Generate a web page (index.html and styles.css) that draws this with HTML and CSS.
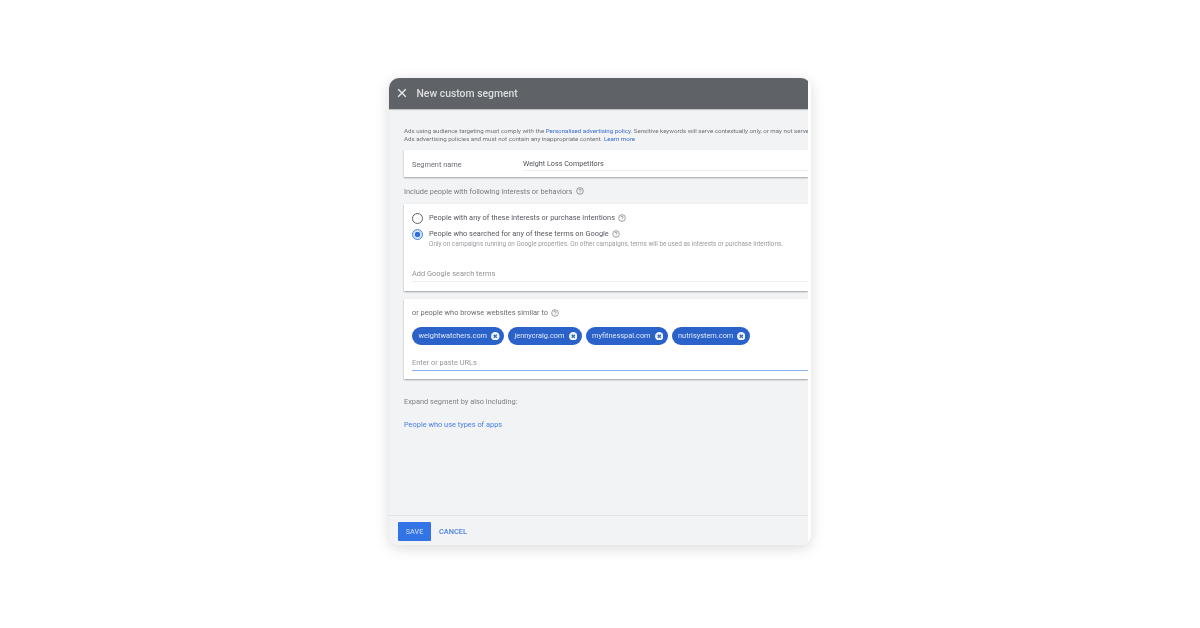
FILE: index.html
```html
<!DOCTYPE html>
<html lang="en">
<head>
    <meta charset="UTF-8">
    <meta name="viewport" content="width=device-width, initial-scale=1.0">
    <title>New custom segment</title>
    <link rel="stylesheet" href="styles.css">
</head>
<body>
    <div class="panel">
        <div class="panel-inner">
            <!-- Header -->
            <header class="top-bar">
                <svg class="close-icon" viewBox="0 0 10 10" width="10" height="10"><path d="M1.2 1.2l7.6 7.6M8.8 1.2l-7.6 7.6"/></svg>
                <span class="top-title">New custom segment</span>
            </header>

            <main class="content">
                <p class="notice">Ads using audience targeting must comply with the <a class="link-dark">Personalised advertising policy.</a> Sensitive keywords will serve contextually only, or may not serve<br>Ads advertising policies and must not contain any inappropriate content. <a class="link-dark">Learn more</a></p>

                <!-- Segment name -->
                <section class="card name-card">
                    <span class="name-label">Segment name</span>
                    <span class="name-value">Weight Loss Competitors</span>
                </section>

                <div class="section-title">Include people with following interests or behaviors
                    <svg class="help" viewBox="0 0 12 12"><circle cx="6" cy="6" r="5"/><path d="M4.4 4.8a1.6 1.6 0 1 1 2.5 1.3c-.6.4-.9.7-.9 1.3M6 8.4v1"/></svg>
                </div>

                <!-- Search terms -->
                <section class="card terms-card">
                    <div class="radio-row">
                        <span class="radio"></span>
                        <div class="radio-copy">People with any of these interests or purchase intentions
                            <svg class="help" viewBox="0 0 12 12"><circle cx="6" cy="6" r="5"/><path d="M4.4 4.8a1.6 1.6 0 1 1 2.5 1.3c-.6.4-.9.7-.9 1.3M6 8.4v1"/></svg>
                        </div>
                    </div>
                    <div class="radio-row radio-row-on">
                        <span class="radio radio-on"></span>
                        <div class="radio-copy">People who searched for any of these terms on Google
                            <svg class="help" viewBox="0 0 12 12"><circle cx="6" cy="6" r="5"/><path d="M4.4 4.8a1.6 1.6 0 1 1 2.5 1.3c-.6.4-.9.7-.9 1.3M6 8.4v1"/></svg>
                            <div class="radio-hint">Only on campaigns running on Google properties. On other campaigns, terms will be used as interests or purchase intentions.</div>
                        </div>
                    </div>
                    <div class="field terms-field">Add Google search terms</div>
                </section>

                <!-- Websites -->
                <section class="card sites-card">
                    <div class="sites-title">or people who browse websites similar to
                        <svg class="help" viewBox="0 0 12 12"><circle cx="6" cy="6" r="5"/><path d="M4.4 4.8a1.6 1.6 0 1 1 2.5 1.3c-.6.4-.9.7-.9 1.3M6 8.4v1"/></svg>
                    </div>
                    <div class="chips">
                        <span class="chip">weightwatchers.com<svg class="chip-x" viewBox="0 0 10 10"><circle cx="5" cy="5" r="5"/><path d="M3.2 3.2l3.6 3.6M6.8 3.2l-3.6 3.6"/></svg></span>
                        <span class="chip">jennycraig.com<svg class="chip-x" viewBox="0 0 10 10"><circle cx="5" cy="5" r="5"/><path d="M3.2 3.2l3.6 3.6M6.8 3.2l-3.6 3.6"/></svg></span>
                        <span class="chip">myfitnesspal.com<svg class="chip-x" viewBox="0 0 10 10"><circle cx="5" cy="5" r="5"/><path d="M3.2 3.2l3.6 3.6M6.8 3.2l-3.6 3.6"/></svg></span>
                        <span class="chip">nutrisystem.com<svg class="chip-x" viewBox="0 0 10 10"><circle cx="5" cy="5" r="5"/><path d="M3.2 3.2l3.6 3.6M6.8 3.2l-3.6 3.6"/></svg></span>
                    </div>
                    <div class="field urls-field">Enter or paste URLs</div>
                </section>

                <div class="expand-title">Expand segment by also including:</div>
                <a class="apps-link">People who use types of apps</a>
            </main>

            <!-- Footer -->
            <footer class="bottom-bar">
                <button class="save-btn" type="button">SAVE</button>
                <button class="cancel-btn" type="button">CANCEL</button>
            </footer>
        </div>
    </div>
</body>
</html>
```

FILE: styles.css
```css
* {
    box-sizing: border-box;
}
body {
    margin: 0;
    height: 628px;
    overflow: hidden;
    background-color: #fff;
    font-family: Roboto, "Liberation Sans", sans-serif;
    color: #5f6368;
}
.panel {
    width: 422px;
    height: 467px;
    margin: 78px auto 0;
    border-radius: 10px;
    background-color: #fff;
    box-shadow: 0 3px 14px rgba(0, 0, 0, 0.15);
    overflow: hidden;
}
.panel-inner {
    display: flex;
    flex-direction: column;
    width: 419px;
    height: 100%;
    background-color: #f1f3f4;
    overflow: hidden;
    filter: blur(0.65px);
}
.top-bar {
    display: flex;
    align-items: center;
    flex: none;
    height: 31px;
    padding-left: 8px;
    background-color: #5f6368;
    box-shadow: 0 1px 1px rgba(0, 0, 0, 0.2);
}
.close-icon {
    margin-bottom: 1px;
    fill: none;
    stroke: #eceded;
    stroke-width: 1.3;
}
.top-title {
    margin-left: 9.5px;
    font-size: 10.4px;
    font-weight: 500;
    color: #dcddde;
}
.content {
    flex: 1;
    padding: 17.5px 0 0 15px;
    width: 419px;
}
.notice {
    margin: 0;
    width: 404px;
    font-size: 6.18px;
    line-height: 8px;
    white-space: nowrap;
    color: #6f7378;
}
.link-dark {
    color: #3a6bd0;
}
.card {
    background-color: #fff;
    box-shadow: 0 1px 1.5px rgba(60, 64, 67, 0.45);
}
.name-card {
    display: flex;
    height: 27px;
    margin-top: 7.5px;
    padding-left: 8px;
}
.name-label {
    width: 111px;
    padding-top: 9.5px;
    font-size: 7.4px;
    line-height: 9px;
    color: #6a6e73;
}
.name-value {
    flex: 1;
    height: 20.5px;
    padding-top: 8.5px;
    border-bottom: 1px solid #eceff1;
    font-size: 7.2px;
    line-height: 9px;
    color: #4f5358;
}
.section-title {
    display: flex;
    align-items: center;
    gap: 2.5px;
    height: 14px;
    margin-top: 7px;
    font-size: 7.4px;
    color: #777b80;
}
.help {
    flex: none;
    display: inline-block;
    width: 8px;
    height: 8px;
    margin-left: 1px;
    vertical-align: -1.5px;
    fill: none;
    stroke: #5f6368;
    stroke-width: 0.9;
}
.terms-card {
    height: 87px;
    margin-top: 6px;
    padding: 8px 0 0 8px;
}
.radio-row {
    display: flex;
    align-items: flex-start;
    gap: 6px;
    height: 12px;
}
.radio-row-on {
    height: 20px;
    margin-top: 4px;
}
.radio {
    flex: none;
    width: 11px;
    height: 11px;
    margin-top: 0.5px;
    border: 1px solid #5f6368;
    border-radius: 50%;
}
.radio-on {
    border-color: #4285f4;
    background: radial-gradient(circle, #2f6fe0 0 2.5px, #d3e3fb 3px);
}
.radio-copy {
    font-size: 7.4px;
    line-height: 12px;
    color: #55595e;
    white-space: nowrap;
}
.radio-hint {
    font-size: 6.38px;
    line-height: 8px;
    color: #999ca0;
}
.field {
    font-size: 7.4px;
    line-height: 9px;
    color: #8f9296;
    border-bottom: 1px solid #eceff1;
}
.terms-field {
    height: 12.5px;
    margin-top: 21px;
}
.sites-card {
    height: 80px;
    margin-top: 8px;
    padding: 9px 0 0 8px;
}
.sites-title {
    display: flex;
    align-items: center;
    gap: 2px;
    height: 9px;
    font-size: 7.4px;
    color: #6a6e73;
}
.chips {
    display: flex;
    gap: 4px;
    margin-top: 10px;
}
.chip {
    display: flex;
    align-items: center;
    justify-content: space-between;
    height: 17.5px;
    padding: 0 4.5px 0 6.5px;
    border-radius: 9px;
    background-color: #2b62c9;
    font-size: 7.4px;
    color: #dfe8f8;
}
.chip:nth-child(1) { width: 92px; }
.chip:nth-child(2) { width: 73.5px; }
.chip:nth-child(3) { width: 82px; }
.chip:nth-child(4) { width: 78px; }
.chip-x {
    width: 8.5px;
    height: 8.5px;
}
.chip-x circle {
    fill: #f0f4fb;
}
.chip-x path {
    fill: none;
    stroke: #2b62c9;
    stroke-width: 1.4;
}
.urls-field {
    height: 18px;
    margin-top: 8.5px;
    padding-top: 4.5px;
    border-bottom: 1.5px solid #8ab0f5;
    color: #94979b;
}
.expand-title {
    margin-top: 17.5px;
    height: 9px;
    font-size: 7.4px;
    line-height: 9px;
    color: #7f8287;
}
.apps-link {
    display: block;
    margin-top: 14px;
    font-size: 7.4px;
    line-height: 9px;
    color: #4a80e8;
}
.bottom-bar {
    display: flex;
    align-items: center;
    flex: none;
    gap: 8px;
    height: 30px;
    padding: 2px 0 0 9px;
    border-top: 1px solid #e2e4e6;
}
.save-btn {
    width: 33px;
    height: 19px;
    padding: 0;
    border: 0;
    border-radius: 1px;
    background-color: #3273e6;
    font-family: inherit;
    font-size: 7.2px;
    font-weight: 500;
    color: #b9cff6;
}
.cancel-btn {
    padding: 0;
    border: 0;
    background: none;
    font-family: inherit;
    font-size: 7.4px;
    font-weight: 500;
    color: #4a80e8;
}
```
